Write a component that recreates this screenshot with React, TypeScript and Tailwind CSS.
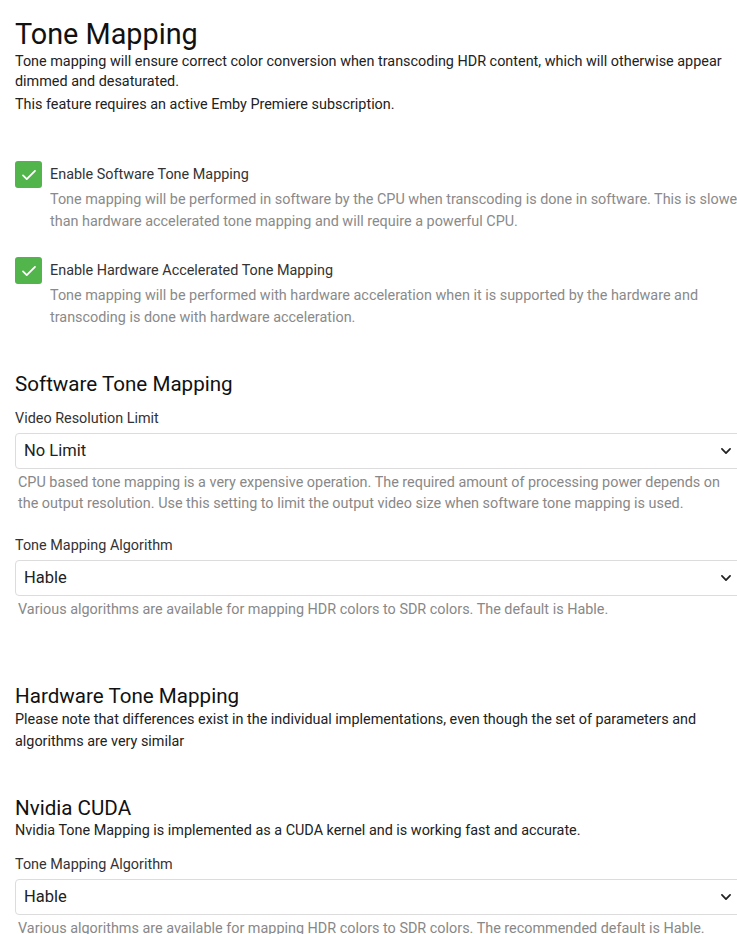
import React from "react";

const font = { fontFamily: "Roboto, 'Noto Sans', sans-serif" };

const Check = ({ label, desc }: { label: string; desc: string }) => (
  <div>
    <div className="flex h-[27px] items-center">
      <div className="flex h-[27px] w-[27px] items-center justify-center rounded-[3px] bg-[#52b54b]">
        <svg width="18" height="18" viewBox="0 0 24 24" fill="none">
          <path d="M4 12.5l5 5L20 6.5" stroke="#fff" strokeWidth="2.4" strokeLinecap="round" strokeLinejoin="round" />
        </svg>
      </div>
      <span className="ml-[8px] text-[14.4px] leading-[20px] text-[#333]">{label}</span>
    </div>
    <p className="mt-[1px] pl-[35px] text-[14.4px] leading-[22px] text-[#8a8a8a]">{desc}</p>
  </div>
);

const Select = ({ label, value, help }: { label: string; value: string; help: string }) => (
  <div>
    <div className="text-[14.4px] leading-[20px] text-[#333]">{label}</div>
    <div className="mt-[4px] flex h-[36px] items-center justify-between rounded-[4px] border border-[#dcdcdc] bg-white pl-[8px] pr-[11px]">
      <span className="text-[16.5px] text-[#222]">{value}</span>
      <svg width="14" height="14" viewBox="0 0 24 24" fill="none">
        <path d="M5 8.5l7 7 7-7" stroke="#222" strokeWidth="3" strokeLinecap="round" strokeLinejoin="round" />
      </svg>
    </div>
    <p className="mt-[3px] px-[3px] text-[14.4px] leading-[21px] text-[#888]">{help}</p>
  </div>
);

export default function App() {
  return (
    <div className="w-full overflow-hidden bg-white" style={font}>
      <div className="w-[745px] pl-[15px] pt-[17px] pb-[20px]">
        <h1 className="text-[28.8px] leading-[34px] text-[#111]">Tone Mapping</h1>
        <p className="mt-[1px] text-[14.4px] leading-[20px] text-[#222]">
          Tone mapping will ensure correct color conversion when transcoding HDR content, which will otherwise appear
          dimmed and desaturated.
        </p>
        <p className="mt-[3px] text-[14.4px] leading-[20px] text-[#222]">
          This feature requires an active Emby Premiere subscription.
        </p>

        <div className="mt-[46px]">
          <Check
            label="Enable Software Tone Mapping"
            desc="Tone mapping will be performed in software by the CPU when transcoding is done in software. This is slower than hardware accelerated tone mapping and will require a powerful CPU."
          />
        </div>
        <div className="mt-[24px]">
          <Check
            label="Enable Hardware Accelerated Tone Mapping"
            desc="Tone mapping will be performed with hardware acceleration when it is supported by the hardware and transcoding is done with hardware acceleration."
          />
        </div>

        <h2 className="mt-[43px] text-[20.6px] leading-[24px] text-[#111]">Software Tone Mapping</h2>
        <div className="mt-[13px]">
          <Select
            label="Video Resolution Limit"
            value="No Limit"
            help="CPU based tone mapping is a very expensive operation. The required amount of processing power depends on the output resolution. Use this setting to limit the output video size when software tone mapping is used."
          />
        </div>
        <div className="mt-[22px]">
          <Select
            label="Tone Mapping Algorithm"
            value="Hable"
            help="Various algorithms are available for mapping HDR colors to SDR colors. The default is Hable."
          />
        </div>

        <h2 className="mt-[64px] text-[20.6px] leading-[24px] text-[#111]">Hardware Tone Mapping</h2>
        <p className="mt-[1px] text-[14.4px] leading-[22px] text-[#222]">
          Please note that differences exist in the individual implementations, even though the set of parameters and
          algorithms are very similar
        </p>

        <h2 className="mt-[43px] text-[20.6px] leading-[24px] text-[#111]">Nvidia CUDA</h2>
        <p className="text-[14.4px] leading-[22px] text-[#222]">
          Nvidia Tone Mapping is implemented as a CUDA kernel and is working fast and accurate.
        </p>
        <div className="mt-[13px]">
          <Select
            label="Tone Mapping Algorithm"
            value="Hable"
            help="Various algorithms are available for mapping HDR colors to SDR colors. The recommended default is Hable."
          />
        </div>
      </div>
    </div>
  );
}
